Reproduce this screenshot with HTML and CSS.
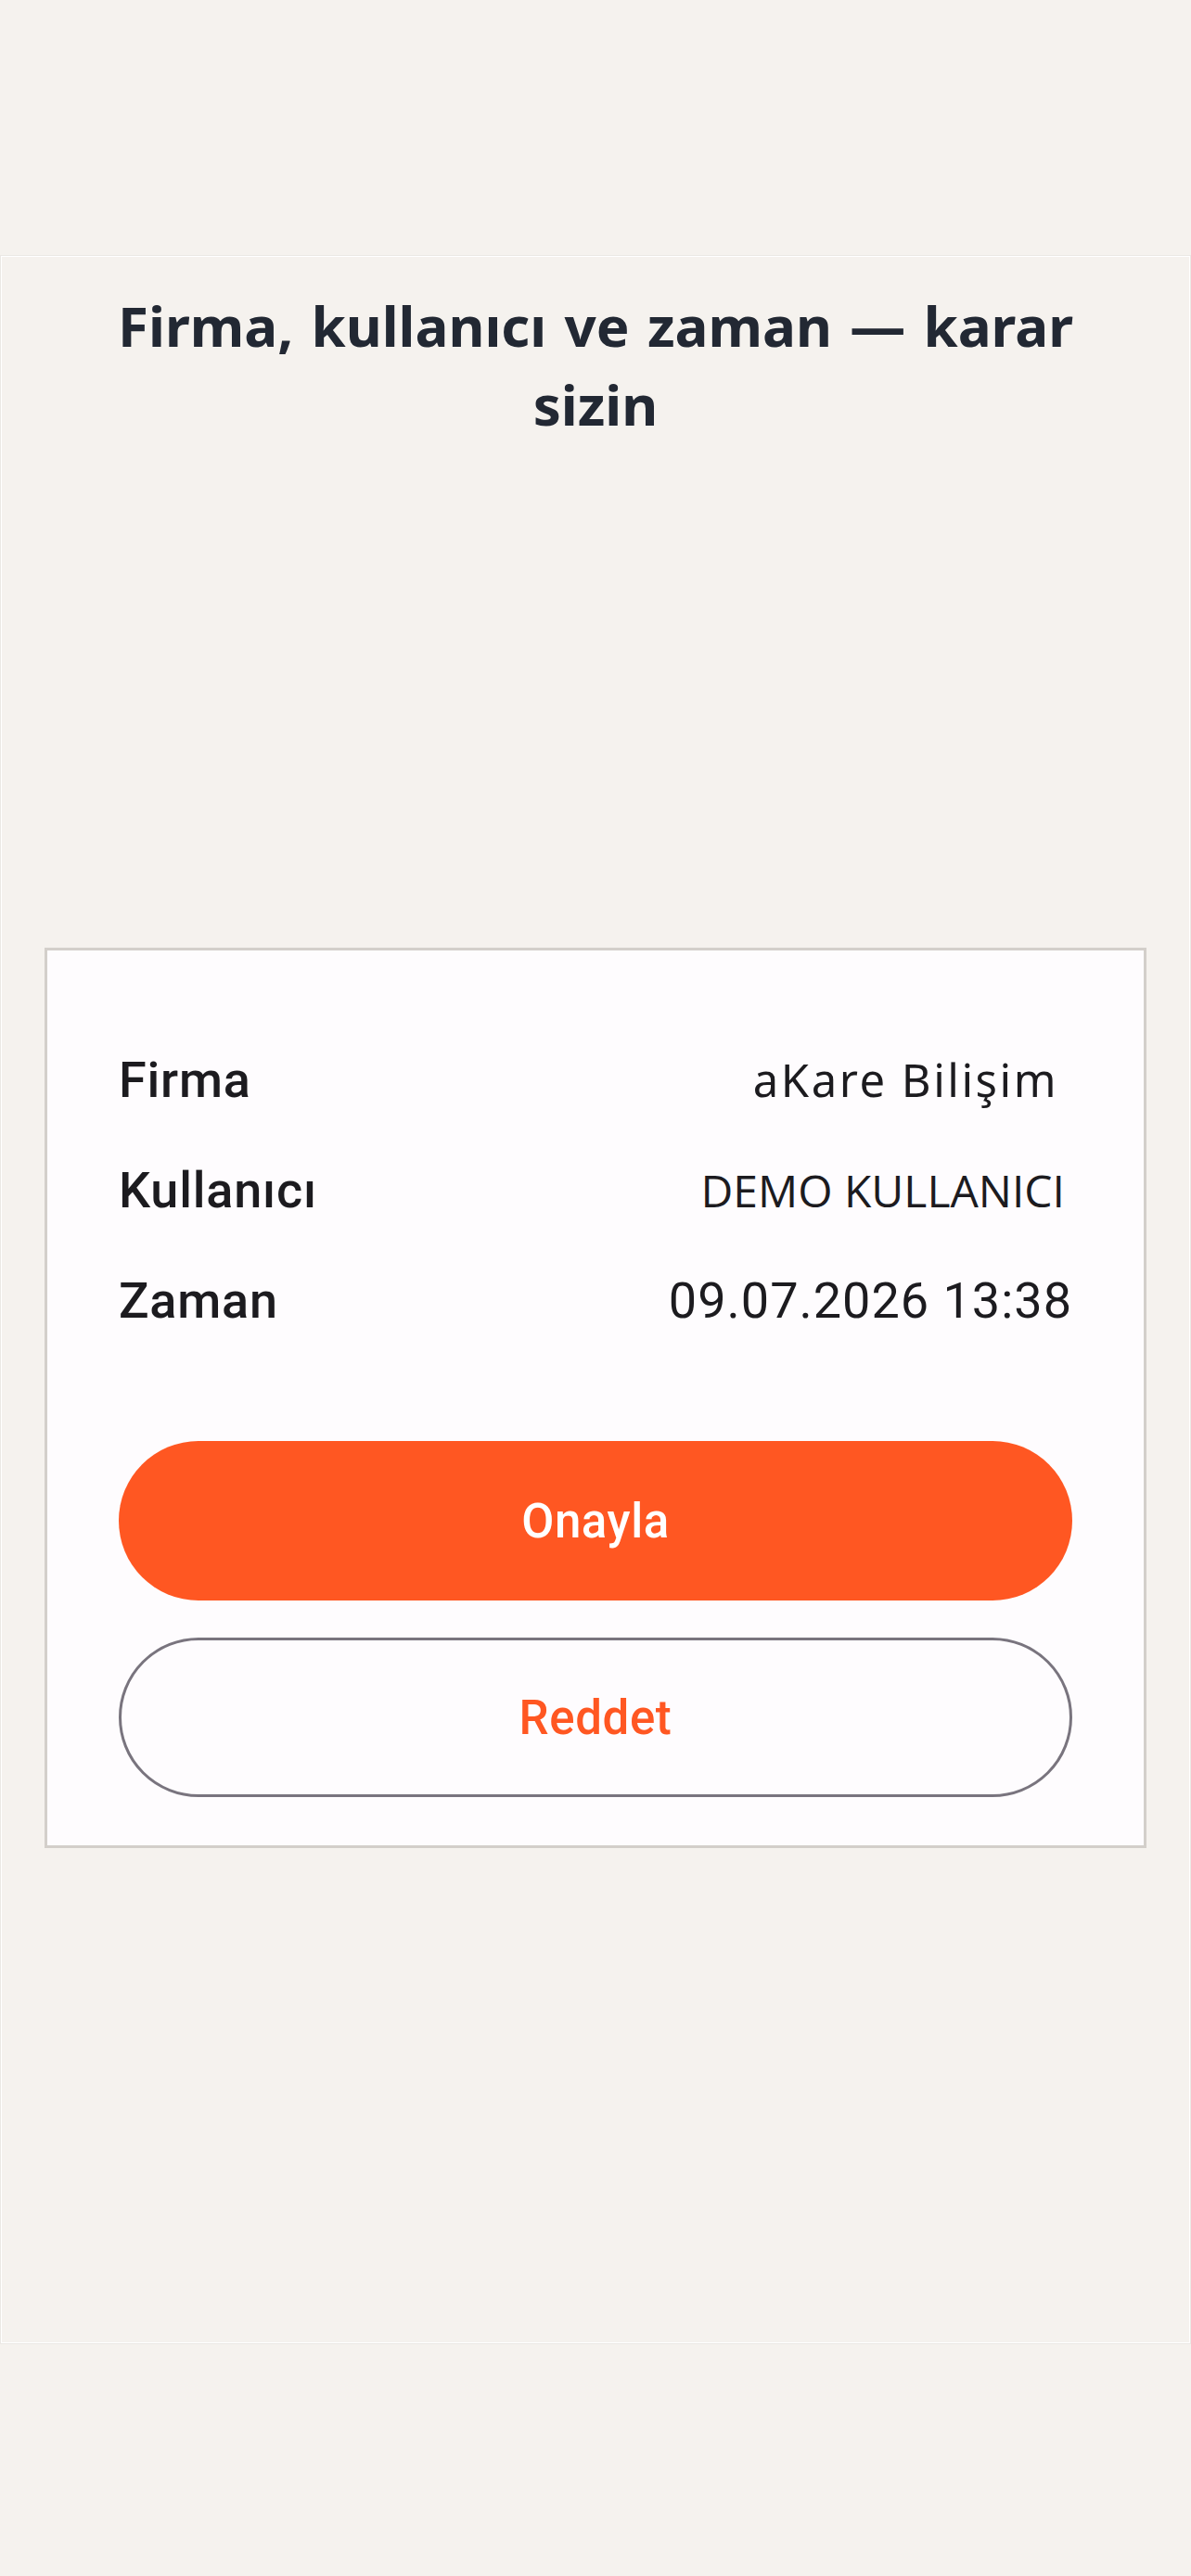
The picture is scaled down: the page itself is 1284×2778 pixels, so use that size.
FILE: index.html
```html
<!DOCTYPE html>
<html lang="tr">
<head>
<meta charset="utf-8">
<title>Onay</title>
<link rel="stylesheet" href="styles.css">
</head>
<body>
<div class="frame">
  <h1 class="title">Firma, kullanıcı ve zaman — karar sizin</h1>
  <section class="card">
    <div class="rows">
      <div class="row">
        <span class="label">Firma</span>
        <span class="value value-text value-firma">aKare Bilişim</span>
      </div>
      <div class="row">
        <span class="label">Kullanıcı</span>
        <span class="value value-text value-user">DEMO KULLANICI</span>
      </div>
      <div class="row">
        <span class="label">Zaman</span>
        <span class="value value-num">09.07.2026 13:38</span>
      </div>
    </div>
    <div class="actions">
      <button class="btn btn-primary" type="button">Onayla</button>
      <button class="btn btn-outline" type="button">Reddet</button>
    </div>
  </section>
</div>
</body>
</html>
```
FILE: styles.css
```css
html, body {
  margin: 0;
  padding: 0;
  background: #f5f2ee;
}
body {
  width: 1284px;
  height: 2778px;
  overflow: hidden;
  font-family: Roboto, "Noto Sans", sans-serif;
}
.frame {
  margin: 276px 1px 0;
  height: 2251px;
  border: 1px solid #ffffff;
  box-shadow: 0 0 0 1px #ebe8e4;
  padding-top: 32px;
  box-sizing: border-box;
}
.title {
  margin: 0 0 543px;
  padding: 0 125px;
  font-family: "Noto Sans", "Open Sans", sans-serif;
  font-weight: 700;
  font-size: 60px;
  line-height: 85px;
  color: #222833;
  text-align: justify;
  text-align-last: center;
}
.card {
  margin: 0 46px;
  background: #fefcfe;
  border: 3px solid #d3cfca;
  padding: 80px 77px 52px;
}
.rows {
  display: flex;
  flex-direction: column;
}
.row {
  display: flex;
  justify-content: space-between;
  align-items: baseline;
  height: 119px;
  line-height: 119px;
}
.label {
  font-family: Roboto, sans-serif;
  font-weight: 500;
  font-size: 54px;
  letter-spacing: 0.8px;
  color: #1c1b1f;
}
.value {
  color: #1c1b1f;
}
.value-text {
  font-weight: 400;
}
.value-firma {
  font-family: "Noto Sans", "Open Sans", sans-serif;
  font-size: 49px;
  margin-right: 15px;
  letter-spacing: 2.5px;
}
.value-user {
  font-family: "Open Sans", "Noto Sans", sans-serif;
  font-size: 48px;
  margin-right: 8px;
}
.value-num {
  font-family: Roboto, sans-serif;
  font-weight: 400;
  font-size: 54px;
  letter-spacing: 1px;
}
.actions {
  display: flex;
  flex-direction: column;
  gap: 40px;
  margin-top: 92px;
}
.btn {
  display: block;
  width: 100%;
  height: 172px;
  border-radius: 86px;
  font-family: Roboto, sans-serif;
  font-weight: 500;
  font-size: 51px;
  letter-spacing: 0.6px;
  cursor: pointer;
  padding: 0;
  box-sizing: border-box;
}
.btn-primary {
  background: #ff5722;
  color: #ffffff;
  border: none;
}
.btn-outline {
  background: transparent;
  color: #ff5722;
  border: 3px solid #79747e;
}
```
